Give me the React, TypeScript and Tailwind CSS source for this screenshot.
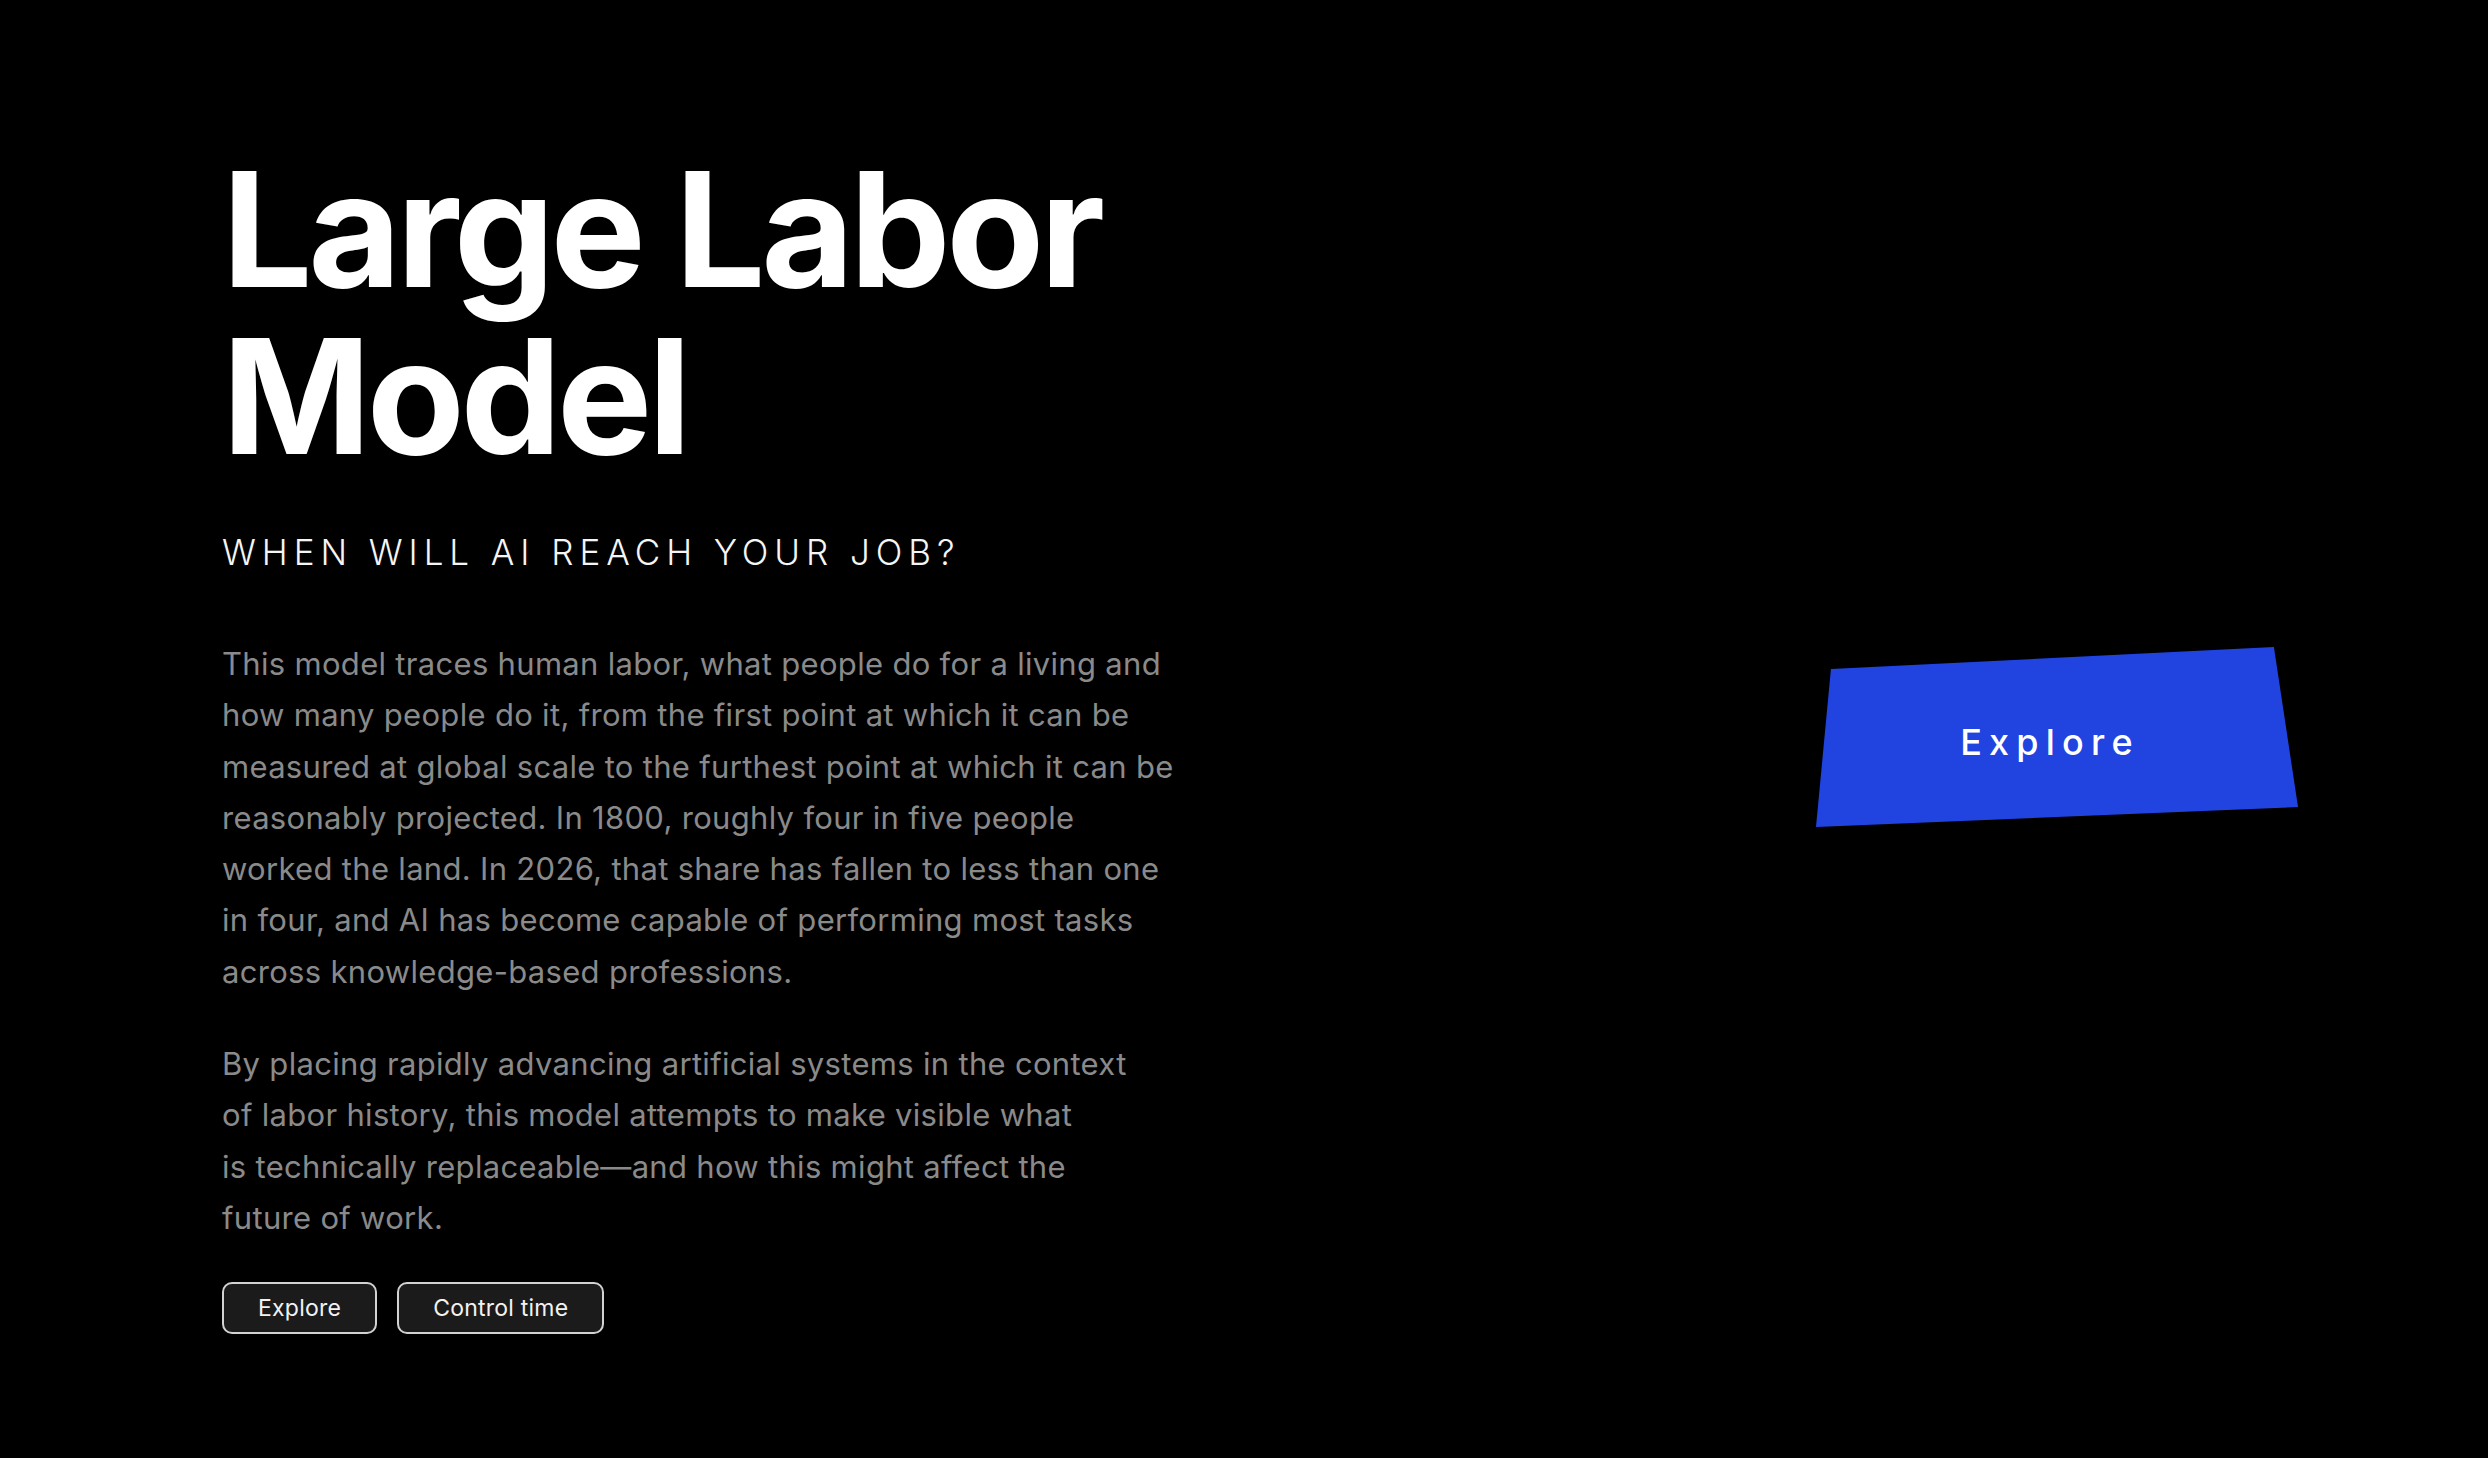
const intro = [
  'This model traces human labor, what people do for a living and',
  'how many people do it, from the first point at which it can be',
  'measured at global scale to the furthest point at which it can be',
  'reasonably projected. In 1800, roughly four in five people',
  'worked the land. In 2026, that share has fallen to less than one',
  'in four, and AI has become capable of performing most tasks',
  'across knowledge-based professions.',
];

const context = [
  'By placing rapidly advancing artificial systems in the context',
  'of labor history, this model attempts to make visible what',
  'is technically replaceable\u2014and how this might affect the',
  'future of work.',
];

function Lines({ lines, className }: { lines: string[]; className?: string }) {
  return (
    <p className={className}>
      {lines.map((l) => (
        <span key={l} className="block whitespace-nowrap">
          {l}
        </span>
      ))}
    </p>
  );
}

function PillButton({ label }: { label: string }) {
  return (
    <button className="h-[52px] rounded-[10px] border-2 border-[#d2d2d2] bg-[#1b1b1b] px-[34px] text-[23px] leading-none tracking-[0.01em] text-[#f2f2f2]">
      {label}
    </button>
  );
}

export default function App() {
  return (
    <div className="flex min-h-screen w-full items-start bg-black font-['Inter','Liberation_Sans',sans-serif] antialiased">
      <div className="flex w-[980px] flex-col pl-[222px] pt-[146px] box-content">
        <h1 className="text-[160px] font-bold leading-[167px] tracking-[-0.027em] text-white">
          Large Labor
          <br />
          Model
        </h1>

        <h2 className="mt-[55px] text-[35px] font-light leading-[35px] tracking-[0.17em] text-[#f5f5f5]">
          WHEN WILL AI REACH YOUR JOB?
        </h2>

        <Lines lines={intro} className="mt-[68px] text-[31px] leading-[51.3px] tracking-[0.01em] text-[#8a8a8a]" />
        <Lines lines={context} className="mt-[41px] text-[31px] leading-[51.3px] tracking-[0.01em] text-[#8a8a8a]" />

        <div className="mt-[39px] flex gap-[20px]">
          <PillButton label="Explore" />
          <PillButton label="Control time" />
        </div>
      </div>

      {/* skewed call-to-action block */}
      <button className="ml-auto mr-[190px] mt-[647px] flex h-[180px] w-[482px] items-center justify-center bg-[#2144e1] pt-[9px] pr-[14px] text-[36px] font-medium tracking-[0.2em] text-white [clip-path:polygon(3.1%_12.2%,95%_0%,100%_88.9%,0%_100%)]">
        Explore
      </button>
    </div>
  );
}
